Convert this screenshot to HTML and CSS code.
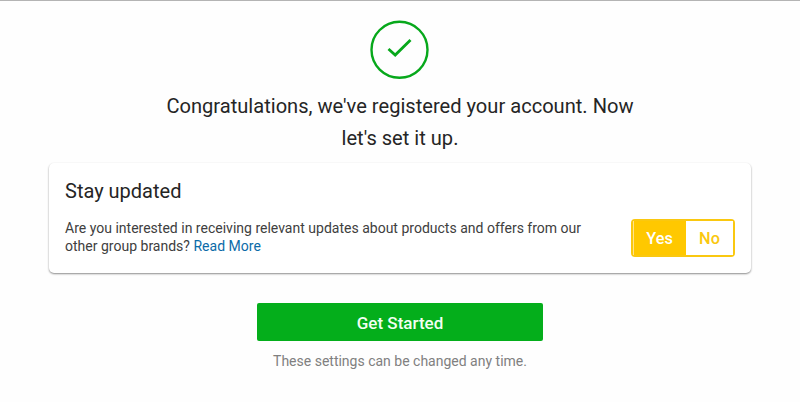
FILE: index.html
```html
<!DOCTYPE html>
<html lang="en">
<head>
    <meta charset="UTF-8">
    <meta name="viewport" content="width=device-width, initial-scale=1.0">
    <title>Account registered</title>
    <link rel="stylesheet" href="styles.css">
</head>
<body>

    <main class="welcome">
        <svg class="success-icon" viewBox="0 0 60 60" fill="none" stroke="#07a81b">
            <circle cx="29.5" cy="29.8" r="28" stroke-width="2.4"/>
            <path d="M18.5 29 L25.2 35 L40.5 20" stroke-width="2.8"/>
        </svg>
        <h1>Congratulations, we've registered your account. Now<br>let's set it up.</h1>

        <section class="card">
            <h2>Stay updated</h2>
            <div class="card-row">
                <p>Are you interested in receiving relevant updates about products and offers from our<br>other group brands? <a href="#">Read More</a></p>
                <div class="toggle">
                    <button class="toggle-option active">Yes</button>
                    <button class="toggle-option">No</button>
                </div>
            </div>
        </section>

        <button class="start-button">Get Started</button>
        <p class="note">These settings can be changed any time.</p>
    </main>

</body>
</html>
```
FILE: styles.css
```css
* {
    box-sizing: border-box;
}

body {
    margin: 0;
    height: 402px;
    overflow: hidden;
    border-top: 1px solid #b4b4b4;
    background-color: #fefefe;
    font-family: Roboto, "Liberation Sans", sans-serif;
    color: #252525;
}

h1, h2, p {
    margin: 0;
    font-weight: 400;
}

button {
    padding: 0;
    border: none;
    font-family: inherit;
    cursor: pointer;
}

.welcome {
    display: flex;
    flex-direction: column;
    align-items: center;
    padding-top: 19px;
}

.success-icon {
    width: 60px;
    height: 60px;
}

h1 {
    margin-top: 10px;
    font-size: 20.1px;
    line-height: 32px;
    text-align: center;
}

.card {
    width: 702px;
    height: 110px;
    margin-top: 9px;
    padding: 16px 16px 0;
    border-radius: 5px;
    background-color: #fff;
    box-shadow: 0 1px 2px rgba(0, 0, 0, 0.45);
}

h2 {
    font-size: 20px;
    line-height: 24px;
}

.card-row {
    display: flex;
    justify-content: space-between;
    align-items: flex-start;
    margin-top: 16px;
}

.card p {
    font-size: 14.02px;
    line-height: 18px;
    color: #404040;
}

.card a {
    color: #0c6ba8;
    text-decoration: none;
}

/* Yes / No switch */
.toggle {
    display: flex;
    width: 104px;
    height: 38px;
    border: 2px solid #fac810;
    border-radius: 4px;
}

.toggle-option {
    flex: 1;
    background-color: #fff;
    font-size: 16.3px;
    font-weight: 500;
    color: #fac810;
}

.toggle-option.active {
    flex: 0 0 53px;
    background-color: #ffc800;
    box-shadow: inset 1px 0 #ffe38a;
    color: #fff;
}

.start-button {
    width: 286px;
    height: 38px;
    margin-top: 30px;
    padding-top: 2px;
    border-radius: 2px;
    background-color: #04ae1b;
    font-size: 17px;
    font-weight: 500;
    color: #f2fff2;
}

.note {
    margin-top: 10px;
    font-size: 14px;
    line-height: 20px;
    color: #808080;
}
```
